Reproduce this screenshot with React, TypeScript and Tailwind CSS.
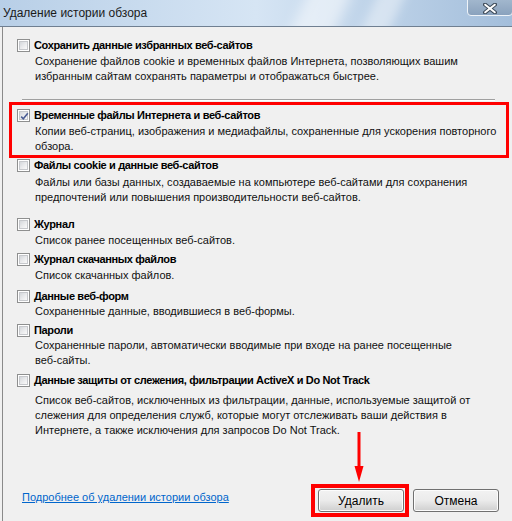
import React from "react";

function Cb({ checked = false }: { checked?: boolean }) {
  return (
    <div className="relative w-[13px] h-[13px] shrink-0 border border-[#8e8f8f] bg-white p-[1px]">
      <div className="w-full h-full bg-gradient-to-br from-[#d4d7db] via-[#e9eaec] to-[#fafafa] border border-[#c6c8cc]" />
      {checked && (
        <svg className="absolute left-[1px] top-[1px]" width="11" height="11" viewBox="0 0 11 11">
          <path d="M2.2 5.6 L4.3 7.8 L8.8 2.3" fill="none" stroke="#4a5d94" strokeWidth="1.6" />
        </svg>
      )}
    </div>
  );
}

function Item({
  title,
  lines,
  checked,
  mt,
  dmt,
}: {
  title: string;
  lines: string[];
  checked?: boolean;
  mt: string;
  dmt: string;
}) {
  return (
    <div className={mt}>
      <div className="flex items-center h-[15px] gap-[4px]">
        <Cb checked={checked} />
        <span className="font-bold text-[11px] tracking-[-0.35px] leading-[15px] text-black whitespace-nowrap">
          {title}
        </span>
      </div>
      <div className={`${dmt} pl-[18px] text-[11px] leading-[15px] text-[#111]`}>
        {lines.map((l, i) => (
          <div key={i} className="whitespace-nowrap">
            {l}
          </div>
        ))}
      </div>
    </div>
  );
}

export default function App() {
  return (
    <div className="relative w-[512px] h-[521px] overflow-hidden bg-[#f0f0f0] flex flex-col font-['Liberation_Sans',sans-serif]">
      {/* title bar */}
      <div className="relative h-[27px] shrink-0 border-b border-[#6f7f91] bg-gradient-to-r from-[#b8cfe7] via-[#d6e5f4] to-[#a3bedb] overflow-hidden">
        <div className="absolute left-[300px] top-[-20px] w-[40px] h-[70px] rotate-[25deg] bg-white/50 blur-[6px]" />
        <div className="absolute left-[370px] top-[-20px] w-[25px] h-[70px] rotate-[25deg] bg-white/40 blur-[5px]" />
        <div className="absolute left-[3px] top-[5px] text-[12px] leading-[16px] text-[#1a1a1a]">
          Удаление истории обзора
        </div>
        <div className="absolute left-[467px] top-[-2px] w-[46px] h-[18px] rounded-b-[4px] border border-[#eef3f8] bg-gradient-to-b from-[#a3b8ce] to-[#8aa2bd] flex items-center justify-center">
          <svg width="14" height="11" viewBox="0 0 14 11" className="mt-[2px]">
            <path d="M2 1.5 L12 9.5 M12 1.5 L2 9.5" stroke="#3d4a59" strokeWidth="4" strokeLinecap="round" />
            <path d="M2.2 1.7 L11.8 9.3 M11.8 1.7 L2.2 9.3" stroke="#ffffff" strokeWidth="2" strokeLinecap="round" />
          </svg>
        </div>
      </div>

      {/* body */}
      <div className="flex-1 flex pl-[2px] min-w-0">
        <div className="flex-1 min-w-0 flex flex-col border-l border-[#8a8a8a] pl-[14px]">
          <Item
            mt="mt-[11px]"
            dmt="mt-[1px]"
            title="Сохранить данные избранных веб-сайтов"
            lines={[
              "Сохранение файлов cookie и временных файлов Интернета, позволяющих вашим",
              "избранным сайтам сохранять параметры и отображаться быстрее.",
            ]}
          />
          <div className="mt-[15px] ml-[5px] w-[473px] h-[2px] border-t border-[#a0a0a0] border-b border-b-white" />
          <Item
            mt="mt-[7px]"
            dmt="mt-[1px]"
            checked
            title="Временные файлы Интернета и веб-сайтов"
            lines={[
              "Копии веб-страниц, изображения и медиафайлы, сохраненные для ускорения повторного",
              "обзора.",
            ]}
          />
          <Item
            mt="mt-[4px]"
            dmt="mt-[2px]"
            title="Файлы cookie и данные веб-сайтов"
            lines={[
              "Файлы или базы данных, создаваемые на компьютере веб-сайтами для сохранения",
              "предпочтений или повышения производительности веб-сайтов.",
            ]}
          />
          <Item mt="mt-[12px]" dmt="mt-[1px]" title="Журнал" lines={["Список ранее посещенных веб-сайтов."]} />
          <Item mt="mt-[4px]" dmt="mt-[1px]" title="Журнал скачанных файлов" lines={["Список скачанных файлов."]} />
          <Item
            mt="mt-[6px]"
            dmt="mt-[0px]"
            title="Данные веб-форм"
            lines={["Сохраненные данные, вводившиеся в веб-формы."]}
          />
          <Item
            mt="mt-[4px]"
            dmt="mt-[0px]"
            title="Пароли"
            lines={[
              "Сохраненные пароли, автоматически вводимые при входе на ранее посещенные",
              "веб-сайты.",
            ]}
          />
          <Item
            mt="mt-[5px]"
            dmt="mt-[5px]"
            title="Данные защиты от слежения, фильтрации ActiveX и Do Not Track"
            lines={[
              "Список веб-сайтов, исключенных из фильтрации, данные, используемые защитой от",
              "слежения для определения служб, которые могут отслеживать ваши действия в",
              "Интернете, а также исключения для запросов Do Not Track.",
            ]}
          />

          <div className="mt-auto flex items-start pb-[9px] pr-[13px]">
            <a className="mt-[1px] ml-[5px] text-[11px] leading-[15px] text-[#0066cc] underline cursor-pointer whitespace-nowrap">
              Подробнее об удалении истории обзора
            </a>
            <div className="ml-auto flex gap-[9px]">
              <button className="w-[86px] h-[23px] rounded-[3px] border border-[#707070] bg-gradient-to-b from-[#f2f2f2] via-[#ebebeb] to-[#cfcfcf] text-[12px] text-black shadow-[inset_0_0_0_1px_#fcfcfc]">
                Удалить
              </button>
              <button className="w-[86px] h-[23px] rounded-[3px] border border-[#707070] bg-gradient-to-b from-[#f2f2f2] via-[#ebebeb] to-[#cfcfcf] text-[12px] text-black shadow-[inset_0_0_0_1px_#fcfcfc]">
                Отмена
              </button>
            </div>
          </div>
        </div>
      </div>

      {/* annotations */}
      <div className="absolute left-[9px] top-[102px] w-[500px] h-[56px] border-[3px] border-[#ff0000]" />
      <div className="absolute left-[311px] top-[484px] w-[98px] h-[33px] border-[4px] border-[#ff0000]" />
      <svg className="absolute left-[352px] top-[432px]" width="14" height="52" viewBox="0 0 14 52">
        <rect x="5.5" y="0" width="3" height="38" fill="#ff0000" />
        <path d="M2.5 34 L11.5 34 L7 50 Z" fill="#ff0000" />
      </svg>
    </div>
  );
}
